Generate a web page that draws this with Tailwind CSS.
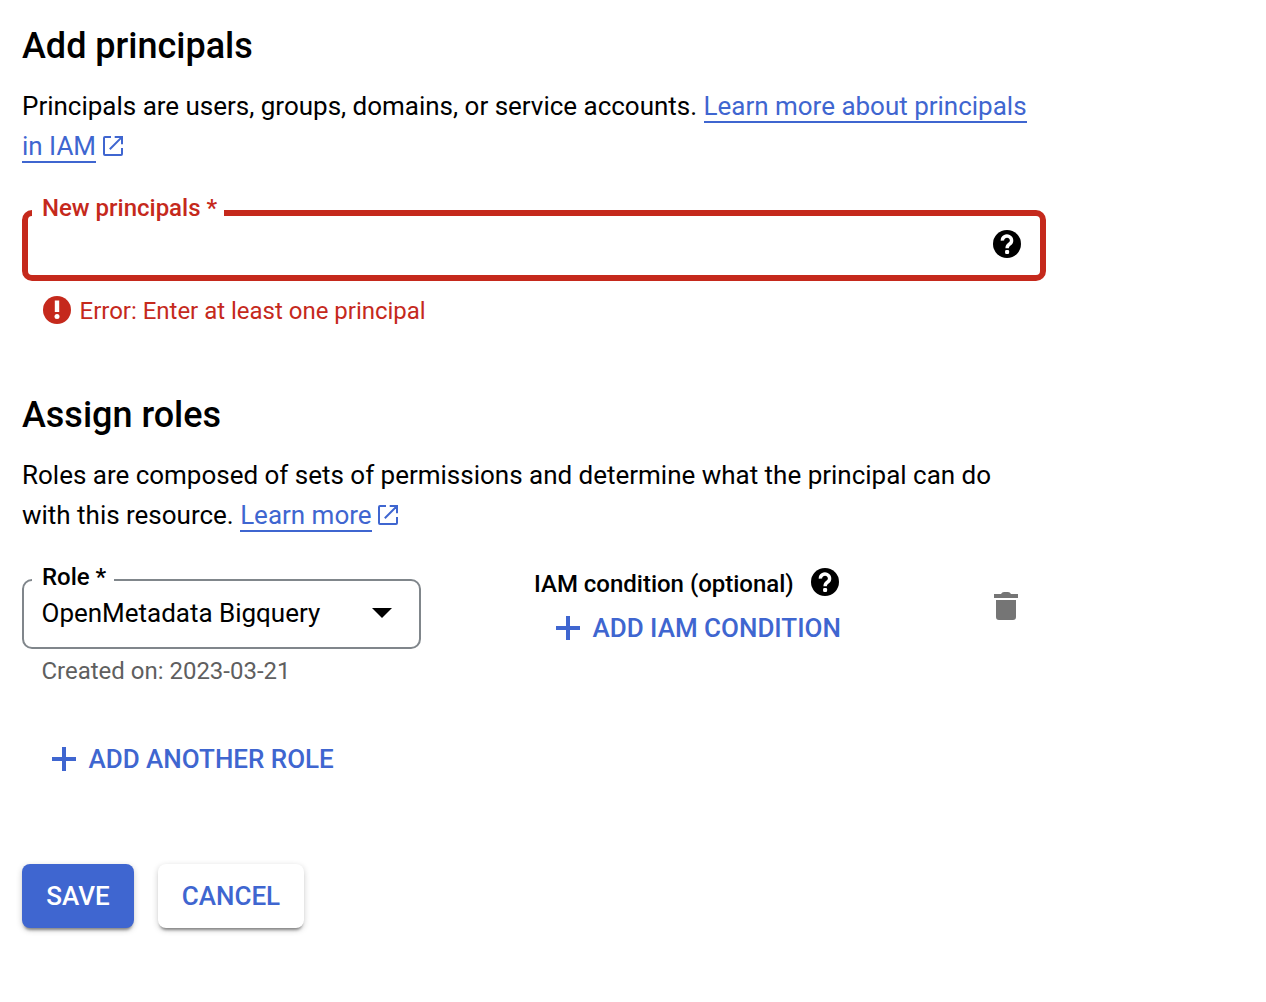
<!DOCTYPE html>
<html lang="en">
<head>
<meta charset="utf-8">
<title>Add principals</title>
<script src="https://cdn.jsdelivr.net/npm/@tailwindcss/browser@4"></script>
</head>
<body class="min-h-screen bg-white text-black font-['Roboto',sans-serif] text-[26px] leading-10 tracking-[-0.012px] antialiased">
<svg class="hidden">
  <symbol id="help" viewBox="0 0 28 28">
    <circle cx="14" cy="14" r="14" fill="#000"/>
    <path d="M9.4 10.6a4.6 4.4 0 1 1 7.2 3.4c-1.7 1.2-2.5 2-2.5 4.3" fill="none" stroke="#fff" stroke-width="3.4"/>
    <rect x="12.1" y="20" width="4" height="4" rx="1.2" fill="#fff"/>
  </symbol>
  <symbol id="open" viewBox="0 0 20 20">
    <path d="M8 1H2Q1 1 1 2V18Q1 19 2 19H18Q19 19 19 18V12M11.7 1H19V8.3M18.6 1.4L6.8 13.2" fill="none" stroke="currentColor" stroke-width="2"/>
  </symbol>
  <symbol id="plus" viewBox="0 0 24 24">
    <path d="M12 0V24M0 12H24" fill="none" stroke="currentColor" stroke-width="4"/>
  </symbol>
</svg>
<main class="w-[1046px] pl-[22px] pt-[22px] pb-16 whitespace-nowrap">
  <section>
    <h2 class="text-4xl/12 font-medium h-12">Add principals</h2>
    <p class="mt-4">Principals are users, groups, domains, or service accounts. <a class="text-[#3f66d0] border-b-2 border-[#3f66d0]">Learn more about principals</a><br><a class="text-[#3f66d0] border-b-2 border-[#3f66d0]">in IAM</a><svg class="inline-block size-5 ml-[7px] align-[-1px] text-[#3f66d0]"><use href="#open"/></svg></p>
    <div class="relative mt-11 h-[71px] rounded-[10px] border-6 border-[#c5291c] flex items-center justify-end pr-[19px]">
      <label class="absolute left-1 -top-7 h-10 px-[10px] w-[192px] bg-white text-2xl/10 font-medium text-[#c5291c]">New principals *</label>
      <svg class="size-7 -mt-[3px]"><use href="#help"/></svg>
    </div>
    <div class="mt-[10px] ml-[21px] h-10 flex items-center gap-[8.5px] text-2xl/10 text-[#c5291c]">
      <svg class="size-7 -mt-0.5" viewBox="0 0 28 28"><circle cx="14" cy="14" r="14" fill="#c5291c"/><path d="M11.8 4.5H16.2V16H11.8Z" fill="#fff"/><circle cx="14" cy="20.5" r="2.5" fill="#fff"/></svg>
      <span>Error: Enter at least one principal</span>
    </div>
  </section>
  <section class="mt-[60px]">
    <h2 class="text-4xl/12 font-medium h-12">Assign roles</h2>
    <p class="mt-4">Roles are composed of sets of permissions and determine what the principal can do<br>with this resource. <a class="text-[#3f66d0] border-b-2 border-[#3f66d0]">Learn more</a><svg class="inline-block size-5 ml-[6px] align-[-1px] text-[#3f66d0]"><use href="#open"/></svg></p>
    <div class="mt-11 flex items-start">
      <div class="w-[399px]">
        <div class="relative h-[70px] rounded-[10px] border-2 border-[#80868b] flex items-center justify-between pl-[17.5px] pr-[27px] pb-0.5">
          <label class="absolute left-2 -top-6 h-8 w-[82px] px-[10px] bg-white text-2xl/10 font-medium">Role *</label>
          <span>OpenMetadata Bigquery</span>
          <svg class="w-5 h-[10px]" viewBox="0 0 20 10"><path d="M0 0H20L10 10Z"/></svg>
        </div>
        <div class="mt-0.5 ml-[19.5px] text-2xl/10 text-[#5f5f5f]">Created on: 2023-03-21</div>
      </div>
      <div class="ml-[113px] -mt-[15px] w-[460px]">
        <div class="flex items-center gap-[17px] text-2xl/10 font-medium"><span>IAM condition (optional)</span><svg class="size-7 -mt-1"><use href="#help"/></svg></div>
        <button class="mt-1 ml-[22px] flex items-center gap-[12.5px] font-medium text-[#3f66d0]"><svg class="size-6"><use href="#plus"/></svg><span>ADD IAM CONDITION</span></button>
      </div>
      <svg class="mt-[13px] w-6 h-7" viewBox="0 0 24 28" fill="#757575"><path d="M0 2H7Q8 0 10 0H14Q16 0 17 2H24V6H0ZM2 8H22V25Q22 28 19 28H5Q2 28 2 25Z"/></svg>
    </div>
    <button class="mt-12 ml-[30px] flex items-center gap-[12.5px] font-medium text-[#3f66d0]"><svg class="size-6"><use href="#plus"/></svg><span>ADD ANOTHER ROLE</span></button>
  </section>
  <div class="mt-[85px] flex gap-6 font-medium">
    <button class="w-28 h-16 rounded-lg bg-[#3f66d0] text-white shadow-[0_4px_3px_-2px_#0006,0_2px_6px_#0003]">SAVE</button>
    <button class="w-[146px] h-16 rounded-lg bg-white text-[#3f66d0] shadow-[0_4px_3px_-2px_#0006,0_2px_6px_#0003]">CANCEL</button>
  </div>
</main>
</body>
</html>
